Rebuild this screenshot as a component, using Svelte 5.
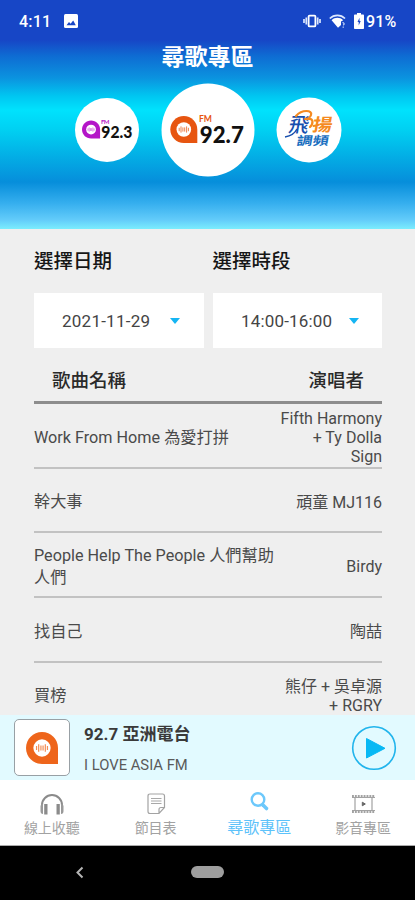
<script>
  const songs = [
    { title: ['Work From Home 為愛打拼'], artist: ['Fifth Harmony', '+ Ty Dolla', 'Sign'], h: 65 },
    { title: ['幹大事'], artist: ['頑童 MJ116'], h: 64 },
    { title: ['People Help The People 人們幫助', '人們'], artist: ['Birdy'], h: 65 },
    { title: ['找自己'], artist: ['陶喆'], h: 65 },
    { title: ['買榜'], artist: ['熊仔 + 吳卓源', '+ RGRY'], h: 64 }
  ];
  const pickers = [
    { label: '選擇日期', value: '2021-11-29', len: 88 },
    { label: '選擇時段', value: '14:00-16:00', len: 91 }
  ];
</script>

{#snippet mark(color)}
  <path d="M13.5 0C6 0 0 6 0 13.5S6 27 13.5 27H27V13.5C27 6 21 0 13.5 0Z" fill={color} />
  <circle cx="13.5" cy="13.5" r="7.3" fill="#fff" />
  <path d="M8.9 11.8v3.4M10.7 10.4v6.2M12.6 11.4v4.2M14.4 11.4v4.2M16.3 10.4v6.2M18.1 11.8v3.4" stroke={color} stroke-width="1" opacity=".75" fill="none" />
{/snippet}

<main>
  <header>
    <div class="status">
      <span class="time">4:11</span>
      <svg class="pic" width="14" height="14" viewBox="0 0 14 14"><rect width="14" height="14" rx="1.5" fill="#fff" /><path d="M2.5 11.2 5 8l1.6 1.8L9.2 6.6l2.6 4.6Z" fill="#1746c6" /></svg>
      <svg class="vib" width="18" height="14" viewBox="0 0 18 14"><rect x="5.6" y="1.6" width="6.8" height="10.8" rx="1" fill="none" stroke="#fff" stroke-width="1.8" /><path d="M3.3 3.5v7M14.7 3.5v7M1 5v4M17 5v4" stroke="#dce8ff" stroke-width="1.7" /></svg>
      <svg class="wifi" width="17" height="14" viewBox="0 0 17 14"><path d="M.8 4.5C5 .2 11.8.2 16 4.5" fill="none" stroke="#dce8ff" stroke-width="1.7" /><path d="M2.6 6.2C6 3 10.8 3 14.2 6.2L12 7.5v3.5l-3 2.8Z" fill="#fff" /><path d="M13.5 8.5c2 0 2 2 .8 2.7M14.2 12.5v1.2" stroke="#dce8ff" stroke-width="1.1" fill="none" /></svg>
      <svg class="bat" width="10" height="16" viewBox="0 0 10 16"><path d="M3 0h4v1.6h2.2q.8 0 .8.8v12.8q0 .8-.8.8H.8q-.8 0-.8-.8V2.4q0-.8.8-.8H3Z" fill="#fff" /><path d="M5.5 4.8 3.5 9h1.2v3.5L6.7 8H5.5Z" fill="#1746c6" /></svg>
      <span class="pct">91%</span>
    </div>
    <h1>尋歌專區</h1>
    <div class="stations">
      <svg width="64" height="64" viewBox="0 0 64 64">
        <circle cx="32" cy="32" r="32" fill="#fff" />
        <g transform="translate(7 22.5) scale(.67)">{@render mark('#b415c8')}</g>
        <text x="26" y="26" class="fm" font-size="6" textLength="8.5" fill="#b415c8">FM</text>
        <text x="26.3" y="40" class="num" font-size="17" textLength="31" lengthAdjust="spacingAndGlyphs">92.3</text>
      </svg>
      <svg width="94" height="94" viewBox="0 0 94 94">
        <circle cx="47" cy="47" r="46.5" fill="#fff" />
        <g transform="translate(9.3 33)">{@render mark('#e75510')}</g>
        <text x="38" y="39.3" class="fm" font-size="8.5" textLength="13" lengthAdjust="spacingAndGlyphs" fill="#e75510">FM</text>
        <text x="38.8" y="59.5" class="num" font-size="23.5" textLength="44" lengthAdjust="spacingAndGlyphs">92.7</text>
      </svg>
      <svg width="66" height="66" viewBox="0 0 66 66">
        <circle cx="33" cy="33" r="32.5" fill="#fff" />
        <g transform="skewX(-10)">
          <text x="18" y="35.5" class="cjk" font-size="20" fill="#174fae" font-weight="500">飛</text>
          <text x="41.5" y="34.5" class="cjk" font-size="17.5" textLength="20" lengthAdjust="spacingAndGlyphs" fill="#f58a20" font-weight="700">揚</text>
          <text x="28.5" y="48" class="cjk" font-size="12" textLength="32" lengthAdjust="spacingAndGlyphs" fill="#1a6fc0" font-weight="700">調頻</text>
        </g>
        <path d="M20 19c6-7 17-6 15-1-1 3-4 4-6 4M32 22c5-1 6 4 2 8" stroke="#f58a20" stroke-width="2.2" fill="none" stroke-linecap="round" />
        <path d="M9 40c6-1 10-4 12-8" stroke="#174fae" stroke-width="1.6" fill="none" />
      </svg>
    </div>
  </header>

  <section class="content">
    <div class="pickers">
      {#each pickers as p}
        <div class="picker">
          <h2>{p.label}</h2>
          <div class="select">
            <svg width="94" height="24"><text x="1" y="18" class="value" textLength={p.len}>{p.value}</text></svg>
            <i></i>
          </div>
        </div>
      {/each}
    </div>
    <div class="thead"><span>歌曲名稱</span><span>演唱者</span></div>
    {#each songs as s}
      <div class="row" style:height="{s.h}px">
        <div class="title">{#each s.title as l}<div>{l}</div>{/each}</div>
        <div class="artist">{#each s.artist as l}<div>{l}</div>{/each}</div>
      </div>
    {/each}
  </section>

  <section class="player">
    <div class="cover"><svg width="32" height="32" viewBox="0 0 27 27">{@render mark('#ee651b')}</svg></div>
    <div class="info"><b>92.7 亞洲電台</b><span>I LOVE ASIA FM</span></div>
    <svg class="play" width="46" height="46" viewBox="0 0 46 46"><circle cx="23" cy="23" r="21.3" fill="none" stroke="#20b4ec" stroke-width="1.6" /><path d="M15.5 13.5 34 23.3 15.5 33Z" fill="#08b8f4" stroke="#08b8f4" stroke-linejoin="round" /></svg>
  </section>

  <nav>
    <div class="tab t1">
      <svg width="24" height="22" viewBox="0 0 24 22"><path d="M2 16v-4a10 10 0 0 1 20 0v4" fill="none" stroke="#8b8b8b" stroke-width="2" /><path d="M.5 13Q.5 11 3 11v10Q.5 21 .5 18ZM23.5 13q0-2-2.5-2v10q2.5 0 2.5-3Z" fill="#999" /><path d="M4.2 11h3.300v10.500H4.200ZM16.500 11h3.300v10.500h-3.300Z" fill="#8b8b8b" /></svg>
      <span>線上收聽</span>
    </div>
    <div class="tab t2">
      <svg width="24" height="22" viewBox="0 0 24 22"><path d="M6 1h12.500q2 0 2 2v11.500L15 20.500H6q-2 0-2-2V3q0-2 2-2ZM15 20v-3.500q0-2 2-2h3" fill="none" stroke="#a3a3a3" stroke-width="1.2" /><path d="M7 5.500h10.500M7 8h10.500M7 10.500h10.500" stroke="#a8a8a8" stroke-width="1.2" /></svg>
      <span>節目表</span>
    </div>
    <div class="tab t3">
      <svg width="24" height="22" viewBox="0 0 24 22"><circle cx="11" cy="8.500" r="6.300" fill="none" stroke="#6cc8fb" stroke-width="2.400" /><path d="m16 14 3.500 3.500" stroke="#6cc8fb" stroke-width="3.600" stroke-linecap="round" /></svg>
      <span>尋歌專區</span>
    </div>
    <div class="tab t4">
      <svg width="24" height="22" viewBox="0 0 24 22"><path d="M1 3.500h23M1 18.500h23" stroke="#a2a2a2" stroke-width="3" stroke-dasharray="1.9 1" /><path d="M1 4.500h23M1 17.500h23M4 5v12M21 5v12" stroke="#a2a2a2" stroke-width="1.2" /><path d="m11.300 9.200 3 1.800-3 1.800Z" fill="#666" stroke="#666" /></svg>
      <span>影音專區</span>
    </div>
  </nav>
  <footer>
    <svg width="10" height="13" viewBox="0 0 10 13"><path d="M7.500 1.500 2.500 6.500 7.500 11.500" fill="none" stroke="#b5b5b5" stroke-width="2" /></svg>
    <i></i>
  </footer>
</main>

<style>
  main { width: 415px; height: 900px; display: flex; flex-direction: column; overflow: hidden; background: #efefef; font-family: Roboto, "Noto Sans CJK TC", sans-serif; color: #333; }
  * { box-sizing: border-box; }
  svg { display: block; flex: none; }
  header { height: 229px; flex: none; background: linear-gradient(#1746c6 0, #1746c6 40px, #0e6cd3 56px, #0b93df 78px, #00c6f1 96px, #00e2fd 110px, #00d0f2 130px, #03ade5 157px, #068edb 182px, #35aeee 203px, #63ccfa 220px, #7bedfd 229px); }
  .status { height: 42px; display: flex; align-items: center; padding-left: 19px; color: #fff; font-size: 16px; font-weight: 500; letter-spacing: .2px; }
  .time { width: 31px; white-space: nowrap; }
  .pic { margin-left: 14px; }
  .vib { margin-left: 225px; }
  .wifi { margin-left: 8px; }
  .bat { margin-left: 8px; }
  .pct { margin-left: 2px; }
  h1 { margin: 0; height: 32px; line-height: 32px; text-align: center; color: #fff; font-size: 23px; font-weight: 700; }
  .stations { margin-top: 8px; display: flex; align-items: center; height: 95px; padding-left: 75px; gap: 21.5px; }
  .num { font-family: Lato, sans-serif; font-weight: 900; fill: #111; }
  .fm { font-family: Lato, sans-serif; font-weight: 700; }
  .cjk { font-family: "Noto Sans CJK TC", sans-serif; }
  .content { height: 486px; flex: none; padding: 0 33px 0 34px; overflow: hidden; }
  .pickers { display: flex; gap: 9px; }
  .picker { flex: 1; }
  h2 { margin: 0; height: 64px; padding-top: 1px; line-height: 64px; font-size: 19.5px; font-weight: 500; color: #161616; }
  .select { height: 55px; background: #fff; display: flex; align-items: center; padding-left: 27px; }
  .value { font-size: 17px; fill: #444; }
  .select i { margin-left: 15px; border: 5.5px solid transparent; border-top: 6px solid #15b5f3; border-bottom: 0; }
  .thead { height: 56px; border-bottom: 3px solid #8d8d8d; display: flex; justify-content: space-between; align-items: center; padding: 8px 18px 0 18px; font-size: 18.5px; font-weight: 500; color: #2a2a2a; }
  .row { display: flex; justify-content: space-between; align-items: center; padding-top: 4px; border-bottom: 2px solid #c2c2c2; font-size: 16.2px; color: #4a4a4a; white-space: nowrap; }
  .title { line-height: 22px; }
  .artist { text-align: right; line-height: 19px; font-size: 16px; }
  .row:last-child { padding-top: 3px; }
  .player { height: 65px; flex: none; background: #e2faff; display: flex; align-items: center; padding: 0 18px 0 14px; }
  .cover { width: 56px; height: 57px; background: #fff; border: 1.5px solid #98a0a5; border-radius: 5px; display: grid; place-items: center; }
  .info { flex: 1; padding-left: 14px; display: flex; flex-direction: column; }
  .info b { font-size: 17px; line-height: 24px; font-weight: 700; color: #3a3a3a; }
  .info span { font-size: 14.8px; line-height: 18px; margin-top: 10px; color: #5a5a5a; }
  nav { height: 66px; flex: none; background: #fff; border-bottom: 1px solid #aaa; display: flex; }
  .tab { flex: 1; display: flex; flex-direction: column; align-items: center; padding-top: 13px; font-size: 14px; color: #a2a2a2; }
  .tab span { line-height: 22px; margin-top: 2px; }
  .tab.t3 { color: #5cc2fa; font-size: 16px; padding-top: 11px; }
  .tab.t3 span { margin-top: 4px; }
  footer { flex: 1; background: #000; display: flex; padding: 20px 0 0 75px; align-items: flex-start; }
  footer i { width: 33px; height: 12px; border-radius: 6px; background: #9e9e9e; margin-left: 106px; }
</style>
